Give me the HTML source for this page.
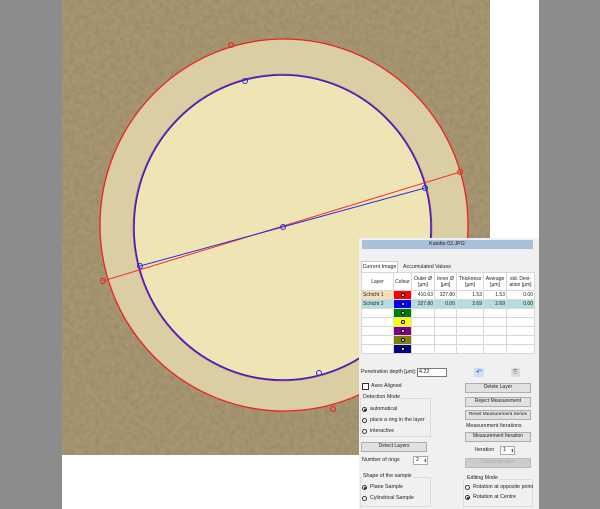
<!DOCTYPE html>
<html><head><meta charset="utf-8"><style>
body{margin:0;width:600px;height:509px;overflow:hidden;background:#fff;position:relative;font-family:"Liberation Sans",sans-serif;font-size:5.3px;color:#222}
.a{position:absolute;white-space:nowrap}
.btn{position:absolute;background:#e1e1e1;border:1px solid #adadad;box-sizing:border-box;text-align:center;line-height:7px;font-size:5px;white-space:nowrap;overflow:hidden}
.rad{position:absolute;width:5px;height:5px;border:1px solid #333;border-radius:50%;background:#fff;box-sizing:border-box}
.rad.on::after{content:"";position:absolute;left:1px;top:1px;width:1.5px;height:1.5px;background:#222;border-radius:50%}
table{border-collapse:collapse;position:absolute;left:361px;top:272px;width:173px;background:#fff;table-layout:fixed}
td{border:1px solid #d8d8d8;height:8px;padding:0 1px;font-size:5px;text-align:right;line-height:7px;overflow:hidden;white-space:nowrap}
th{border:1px solid #d8d8d8;height:15px;font-weight:normal;font-size:5px;line-height:6px}
.sw{position:relative}
.sw i{position:absolute;left:50%;top:50%;width:4px;height:4px;margin:-2px;border-radius:50%;background:#fff;border:0.5px solid #000;box-sizing:border-box}
.grp{position:absolute;border:1px solid #dcdcdc;box-sizing:border-box}
</style></head><body>
<div class="a" style="left:0;top:0;width:62px;height:509px;background:#8c8c8c"></div>
<div class="a" style="left:539px;top:0;width:61px;height:509px;background:#8c8c8c"></div>
<svg class="a" style="left:62px;top:0" width="428" height="455" viewBox="62 0 428 455">
<defs>
<filter id="n" filterUnits="userSpaceOnUse" x="62" y="0" width="428" height="455"><feTurbulence type="fractalNoise" baseFrequency="0.2" numOctaves="3" seed="3"/><feColorMatrix type="matrix" values="0 0 0 0 0.3  0 0 0 0 0.24  0 0 0 0 0.13  0 0 0 1.4 -0.45"/></filter>
</defs>
<rect x="62" y="0" width="428" height="455" fill="#a89672"/>
<rect x="62" y="0" width="428" height="455" fill="#000" filter="url(#n)"/>
<ellipse cx="284" cy="225" rx="184" ry="186" fill="#dacea4"/>
<ellipse cx="282.5" cy="227.5" rx="148.5" ry="152.5" fill="#efe4b3"/>
<ellipse cx="284" cy="225" rx="184" ry="186" fill="none" stroke="#f02020" stroke-width="1.3"/>
<ellipse cx="282.5" cy="227.5" rx="148.5" ry="152.5" fill="none" stroke="#2020e0" stroke-width="1.5"/>
<ellipse cx="282.5" cy="227.5" rx="149.5" ry="153.5" fill="none" stroke="#e03030" stroke-width="0.6"/>
<line x1="103" y1="281" x2="460" y2="172" stroke="#f03030" stroke-width="1"/>
<line x1="140" y1="266" x2="425" y2="188" stroke="#2a2ae0" stroke-width="1"/>
<g fill="none" stroke="#f02020" stroke-width="1"><circle cx="231" cy="45" r="2.5"/><circle cx="460" cy="172" r="2.5"/><circle cx="103" cy="281" r="2.5"/><circle cx="333" cy="409" r="2.5"/></g>
<g fill="none" stroke="#2a2ae0" stroke-width="1"><circle cx="245" cy="81" r="2.5"/><circle cx="425" cy="188" r="2.5"/><circle cx="140" cy="266" r="2.5"/><circle cx="319" cy="373" r="2.5"/><circle cx="283" cy="227" r="2.5"/></g>
</svg>
<div class="a" style="left:359px;top:238px;width:180px;height:271px;background:#f0f0f0"></div>
<div class="a" style="left:362px;top:240px;width:171px;height:9px;background:#a9c0dd;text-align:center;line-height:9px">Kalotte 02.JPG'</div>
<div class="a" style="left:361px;top:261px;width:37px;height:11px;background:#fff;border:1px solid #ccc;border-bottom:none;box-sizing:border-box;line-height:10px;text-align:center">Current Image</div>
<div class="a" style="left:400px;top:262px;width:54px;height:10px;line-height:10px;text-align:center">Accumulated Values</div>
<table>
<colgroup><col style="width:32px"><col style="width:18px"><col style="width:23px"><col style="width:22px"><col style="width:27px"><col style="width:23px"><col style="width:28px"></colgroup>
<tr><th>Layer</th><th>Colour</th><th>Outer Ø<br>[µm]</th><th>Inner Ø<br>[µm]</th><th>Thickness<br>[µm]</th><th>Average<br>[µm]</th><th>std. Devi-<br>ation [µm]</th></tr>
<tr><td style="text-align:left;background:#f6deb8">Schicht 1</td><td class="sw" style="background:#f00"><i style="background:#fff"></i></td><td>410.63</td><td>327.80</td><td>1.53</td><td>1.53</td><td>0.00</td></tr>
<tr style="background:#b3dde2"><td style="text-align:left">Schicht 2</td><td class="sw" style="background:#00f"><i></i></td><td>327.80</td><td>0.00</td><td>2.69</td><td>2.69</td><td>0.00</td></tr>
<tr><td></td><td class="sw" style="background:#008000"><i></i></td><td></td><td></td><td></td><td></td><td></td></tr>
<tr><td></td><td class="sw" style="background:#ff0"><i></i></td><td></td><td></td><td></td><td></td><td></td></tr>
<tr><td></td><td class="sw" style="background:#800080"><i></i></td><td></td><td></td><td></td><td></td><td></td></tr>
<tr><td></td><td class="sw" style="background:#808000"><i></i></td><td></td><td></td><td></td><td></td><td></td></tr>
<tr><td></td><td class="sw" style="background:#000080"><i></i></td><td></td><td></td><td></td><td></td><td></td></tr>
</table>
<div class="a" style="left:361px;top:369px">Penetration depth [µm]:</div>
<div class="a" style="left:417px;top:368px;width:30px;height:9px;background:#fff;border:1px solid #7a7a7a;box-sizing:border-box;line-height:7px;padding-left:1px">4.22</div>
<div class="a" style="left:474px;top:368px;width:10px;height:9px;background:#cfe0f5;color:#2255bb;font-size:7px;line-height:9px;text-align:center">↶</div>
<div class="a" style="left:511px;top:368px;width:9px;height:9px;background:#ddd;color:#666;font-size:5px;line-height:9px;text-align:center">⎘</div>
<div class="a" style="left:362px;top:383px;width:5px;height:5px;border:1px solid #333;background:#fff"></div>
<div class="a" style="left:371px;top:383px">Axes Aligned</div>
<div class="grp" style="left:360px;top:398px;width:71px;height:39px"></div>
<div class="a" style="left:362px;top:394px;background:#f0f0f0;padding:0 1px">Detection Mode</div>
<div class="rad on" style="left:362px;top:407px"></div><div class="a" style="left:370px;top:406px">automatical</div>
<div class="rad" style="left:362px;top:418px"></div><div class="a" style="left:370px;top:417px">place a ring in the layer</div>
<div class="rad" style="left:362px;top:429px"></div><div class="a" style="left:370px;top:428px">interactive</div>
<div class="btn" style="left:361px;top:442px;width:66px;height:10px">Detect Layers</div>
<div class="a" style="left:362px;top:457px">Number of rings</div>
<div class="a" style="left:413px;top:456px;width:15px;height:9px;background:#fff;border:1px solid #aaa;box-sizing:border-box;line-height:7px;padding-left:2px">2 <span style="float:right;font-size:4px">⬍</span></div>
<div class="grp" style="left:360px;top:477px;width:71px;height:30px"></div>
<div class="a" style="left:362px;top:473px;background:#f0f0f0;padding:0 1px">Shape of the sample</div>
<div class="rad on" style="left:362px;top:485px"></div><div class="a" style="left:370px;top:484px">Plane Sample</div>
<div class="rad" style="left:362px;top:496px"></div><div class="a" style="left:370px;top:495px">Cylindrical Sample</div>
<div class="btn" style="left:465px;top:383px;width:66px;height:10px">Delete Layer</div>
<div class="btn" style="left:465px;top:397px;width:66px;height:10px">Reject Measurement</div>
<div class="btn" style="left:465px;top:410px;width:66px;height:10px;font-size:4.8px">Reset Measurement Series</div>
<div class="a" style="left:466px;top:423px">Measurement Iterations</div>
<div class="btn" style="left:465px;top:432px;width:66px;height:10px">Measurement Iteration</div>
<div class="a" style="left:475px;top:447px">Iteration</div>
<div class="a" style="left:500px;top:446px;width:15px;height:9px;background:#fff;border:1px solid #aaa;box-sizing:border-box;line-height:7px;padding-left:2px">1 <span style="float:right;font-size:4px">⬍</span></div>
<div class="btn" style="left:465px;top:458px;width:66px;height:10px;background:#ccc;border-color:#bbb;color:#aaa">Delete Iteration</div>
<div class="grp" style="left:463px;top:479px;width:70px;height:28px"></div>
<div class="a" style="left:466px;top:475px;background:#f0f0f0;padding:0 1px">Editing Mode</div>
<div class="rad" style="left:465px;top:485px"></div><div class="a" style="left:473px;top:484px">Rotation at opposite point</div>
<div class="rad on" style="left:465px;top:495px"></div><div class="a" style="left:473px;top:494px">Rotation at Centre</div>
</body></html>
